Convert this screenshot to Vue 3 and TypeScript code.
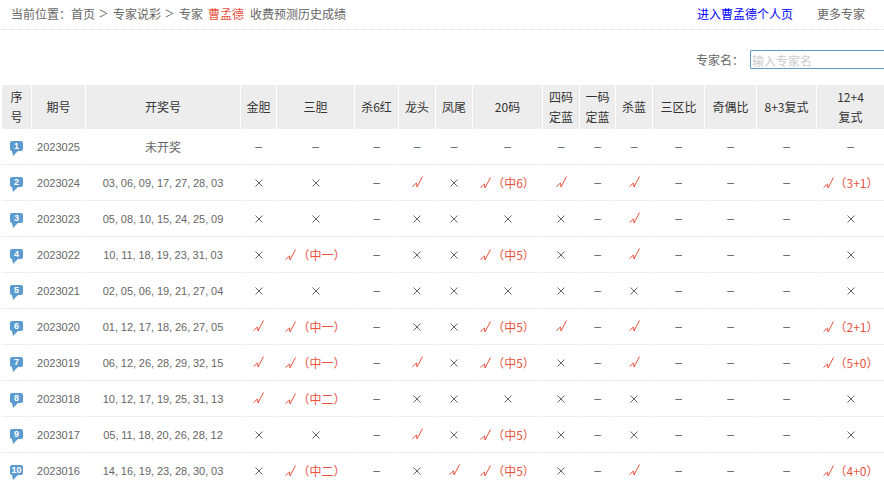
<script setup lang="ts">
type Row = { no: string; nums: string; cells: string[] };
const Y = 'y', X = 'x', D = '-';
const heads = [
  ['序', '号'], ['期号'], ['开奖号'], ['金胆'], ['三胆'], ['杀6红'], ['龙头'], ['凤尾'], ['20码'],
  ['四码', '定蓝'], ['一码', '定蓝'], ['杀蓝'], ['三区比'], ['奇偶比'], ['8+3复式'], ['12+4', '复式'],
];
const widths = [29, 53, 154, 35, 77, 43, 36, 36, 69, 36, 35, 36, 51, 51, 59, 67];
const rows: Row[] = [
  { no: '2023025', nums: '未开奖', cells: [D, D, D, D, D, D, D, D, D, D, D, D, D] },
  { no: '2023024', nums: '03, 06, 09, 17, 27, 28, 03', cells: [X, X, D, Y, X, 'y（中6）', Y, D, Y, D, D, D, 'y（3+1）'] },
  { no: '2023023', nums: '05, 08, 10, 15, 24, 25, 09', cells: [X, X, D, X, X, X, X, D, Y, D, D, D, X] },
  { no: '2023022', nums: '10, 11, 18, 19, 23, 31, 03', cells: [X, 'y（中一）', D, X, X, 'y（中5）', X, D, Y, D, D, D, X] },
  { no: '2023021', nums: '02, 05, 06, 19, 21, 27, 04', cells: [X, X, D, X, X, X, X, D, X, D, D, D, X] },
  { no: '2023020', nums: '01, 12, 17, 18, 26, 27, 05', cells: [Y, 'y（中一）', D, X, X, 'y（中5）', Y, D, Y, D, D, D, 'y（2+1）'] },
  { no: '2023019', nums: '06, 12, 26, 28, 29, 32, 15', cells: [Y, 'y（中一）', D, Y, X, 'y（中5）', X, D, Y, D, D, D, 'y（5+0）'] },
  { no: '2023018', nums: '10, 12, 17, 19, 25, 31, 13', cells: [Y, 'y（中二）', D, X, X, X, X, D, X, D, D, D, X] },
  { no: '2023017', nums: '05, 11, 18, 20, 26, 28, 12', cells: [X, X, D, Y, X, 'y（中5）', X, D, X, D, D, D, X] },
  { no: '2023016', nums: '14, 16, 19, 23, 28, 30, 03', cells: [X, 'y（中二）', D, X, Y, 'y（中5）', X, D, Y, D, D, D, 'y（4+0）'] },
];
const hit = (c: string) => c[0] === 'y';
</script>

<template>
  <div class="page">
    <div class="top">
      <div class="crumb">
        <span>当前位置：</span><span>首页</span><span class="sep">&gt;</span><span>专家说彩</span><span class="sep">&gt;</span>
        <span>专家</span><span class="red name">曹孟德</span><span>收费预测历史成绩</span>
      </div>
      <div class="links">
        <a class="blue">进入曹孟德个人页</a>
        <a>更多专家</a>
      </div>
    </div>
    <div class="search">
      <label>专家名：</label>
      <input placeholder="输入专家名" />
    </div>
    <table>
      <colgroup><col v-for="(w, i) in widths" :key="i" :style="{ width: w + 'px' }" /></colgroup>
      <thead>
        <tr>
          <th v-for="(h, i) in heads" :key="i"><div v-for="l in h" :key="l">{{ l }}</div></th>
        </tr>
      </thead>
      <tbody>
        <tr v-for="(r, i) in rows" :key="r.no">
          <td>
            <span class="badge">{{ i + 1 }}<svg width="6" height="5" viewBox="0 0 6 5"><path d="M0 0H6L1 5Z" fill="#5b9bd0" /></svg></span>
          </td>
          <td class="num">{{ r.no }}</td>
          <td class="num" :class="{ zh: i === 0 }">{{ r.nums }}</td>
          <td v-for="(c, j) in r.cells" :key="j">
            <span v-if="c === '-'" class="dash">–</span>
            <svg v-else-if="c === 'x'" class="x" width="8" height="8" viewBox="0 0 8 8"><path d="M.5.5l7 7M7.5.5l-7 7" stroke="#666" fill="none" /></svg>
            <span v-else-if="hit(c)" class="ok">
              <svg width="11" height="12" viewBox="0 0 11 12"><path d="M.5 10.5 4.5 7 5 11 10.5 .5" stroke="#e8533f" fill="none" /></svg>
              <span v-if="c.length > 1" class="note">{{ c.slice(1) }}</span>
            </span>
          </td>
        </tr>
      </tbody>
    </table>
  </div>
</template>

<style>
html, body { margin: 0; background: #fff; overflow: hidden; }
</style>
<style scoped>
.page {
  width: 884px;
  height: 488px;
  overflow: hidden;
  font: 12px/1 "Noto Sans CJK SC", "Liberation Sans", sans-serif;
  color: #666;
  text-spacing-trim: space-all;
}
.top {
  height: 30px;
  margin-left: 1px;
  box-sizing: border-box;
  border-bottom: 1px dotted #ddd;
  display: flex;
  justify-content: space-between;
  padding: 7px 19px 0 10px;
}
.crumb { display: flex; font-size: 12px; line-height: 14px; }
.crumb span { white-space: nowrap; }
.sep { width: 9px; margin: 0 5px 0 4px; font: 16px/14px "Liberation Serif", serif; }
.name { margin: 0 6px 0 5px; }
.red { color: #e8533f; }
.links { display: flex; gap: 24px; line-height: 14px; }
.blue { color: #00f; }
.search {
  height: 55px;
  display: flex;
  align-items: flex-start;
  padding: 20px 0 0 696px;
  box-sizing: border-box;
  gap: 6px;
}
.search label { line-height: 14px; margin-top: 3px; white-space: nowrap; }
.search input {
  width: 140px;
  height: 15px;
  margin: 0;
  padding: 2px 1px 0;
  border: 1px solid #5b9bd0;
  border-radius: 1px;
  font: 12px/14px "Noto Sans CJK SC", sans-serif;
  outline: none;
  flex: none;
}
.search input::placeholder { color: #ccc; }
table {
  table-layout: fixed;
  border-collapse: separate;
  border-spacing: 1px 0;
  margin-left: 1px;
  width: 884px;
}
th {
  height: 44px;
  padding: 0;
  background: #ededed;
  font-weight: 400;
  color: #333;
  text-align: center;
  line-height: 20px;
}
td {
  height: 35px;
  padding: 0;
  border-bottom: 1px solid #eee;
  text-align: center;
  white-space: nowrap;
}
.num { font: 11px "Liberation Sans", sans-serif; word-spacing: -0.3px; }
.zh { font: 12px "Noto Sans CJK SC", sans-serif; }
.badge {
  position: relative;
  display: inline-block;
  width: 13px;
  height: 10px;
  background: #5b9bd0;
  border-radius: 2px;
  color: #fff;
  font: 700 9px/10px "Liberation Sans", sans-serif;
  vertical-align: 3px;
}
.badge svg { position: absolute; left: 2px; top: 10px; }
.dash { font-family: "Liberation Sans", sans-serif; }
.x { vertical-align: 1px; }
.ok { color: #e8533f; display: inline-flex; align-items: center; }
.note { font: 12px "Noto Sans CJK SC", sans-serif; margin-left: 1px; }
</style>
